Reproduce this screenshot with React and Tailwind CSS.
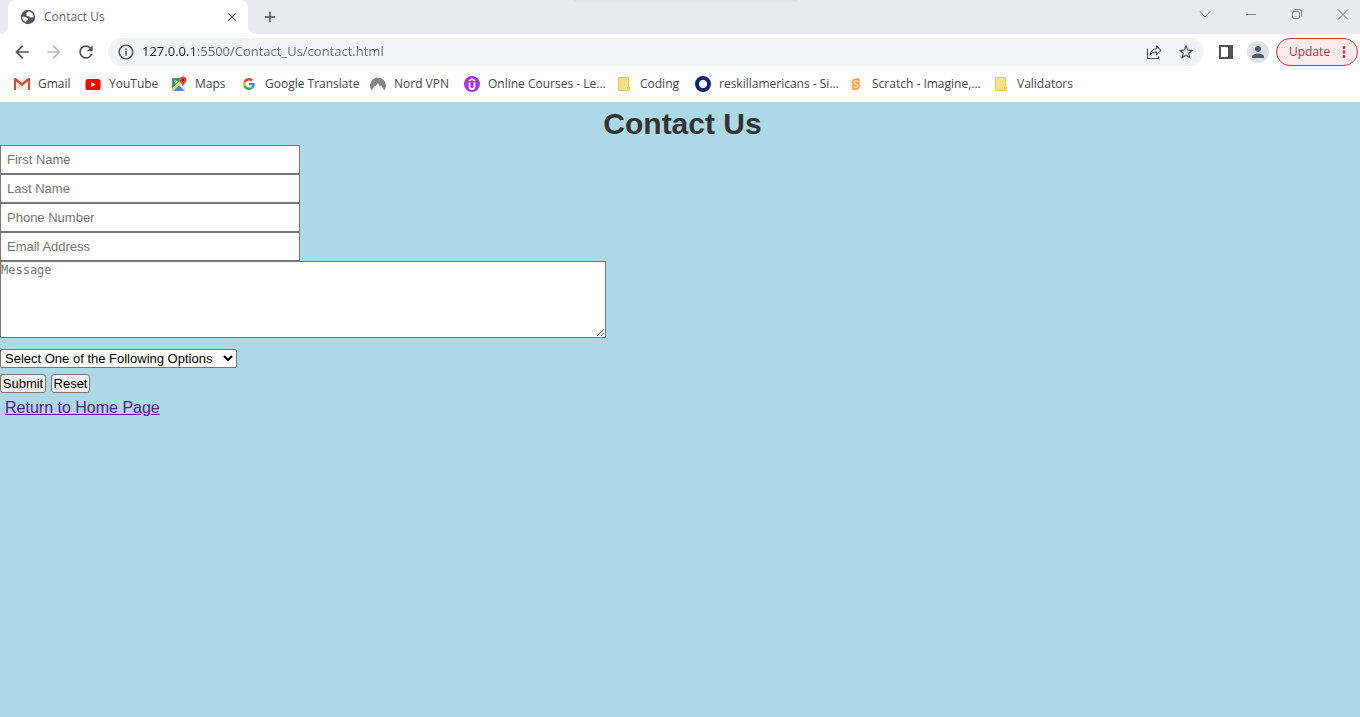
import React from "react";
import {
  MdArrowBack,
  MdArrowForward,
  MdRefresh,
  MdInfoOutline,
  MdStarOutline,
  MdPerson,
  MdClose,
  MdAdd,
  MdMoreVert,
} from "react-icons/md";

function GlobeIcon() {
  return (
    <svg viewBox="0 0 16 16" className="size-4">
      <circle cx="8" cy="8" r="7.200" fill="#53565a" />
      <path d="M8.500 2.300c-.3 1-1.600 1-2 1.700-.3.700.3 1.300-.1 1.900-.4.500.4 1.100 1.300 1.100 1.300.1 1.500.8 2.300 1.200.9.500 2.600-.2 3.700.3A5.800 5.800 0 0 0 8.500 2.300z" fill="#fff" />
      <path d="M2.200 7.600c1.200.3 2.700.1 3.800.7 1.200.6 2 1 1.900 1.900-.1.900-1.300.9-1.500 1.700-.1.600-.3 1-.6 1.400A5.800 5.800 0 0 1 2.200 7.600z" fill="#fff" />
    </svg>
  );
}

function GmailIcon() {
  return (
    <svg viewBox="0 0 16 16" className="size-4">
      <path d="M2 3h12v11H2z" fill="#eceaea" />
      <path d="M0 3.200C0 2.500.6 2 1.300 2H2l6 5 6-5h.7c.7 0 1.300.5 1.300 1.200V14h-2V5.200L8 10 2 5.200V14H0z" fill="#d14836" />
    </svg>
  );
}

function YouTubeIcon() {
  return (
    <svg viewBox="0 0 16 16" className="size-4">
      <rect x="0.5" y="3" width="15" height="11" rx="2.600" fill="#f00" />
      <path d="M6.300 6v5l4.300-2.500z" fill="#fff" />
    </svg>
  );
}

function MapsIcon() {
  return (
    <svg viewBox="0 0 16 16" className="size-4">
      <rect x="1" y="2" width="13" height="13" rx="1" fill="#e4e7ea" />
      <path d="M2 2h10L1 13V3a1 1 0 0 1 1-1z" fill="#2f9e58" />
      <path d="M1 12.500 10.500 3l1.500 1.500L2 15a1 1 0 0 1-1-1z" fill="#f6d25a" />
      <path d="M8 9.200 13.700 15H2.300z" fill="#4a8af4" />
      <path d="M6.300 5.500H4.900v.8h.7a1.200 1.200 0 1 1-.3-1.800" fill="none" stroke="#fff" strokeWidth="0.900" />
      <path d="M12 .500A3.500 3.500 0 0 0 8.500 4c0 2.600 2.700 3.500 3.500 6.500.8-3 3.500-3.900 3.500-6.500A3.500 3.500 0 0 0 12 .500z" fill="#dd4b3e" />
      <circle cx="12" cy="4" r="1.300" fill="#7d231c" />
    </svg>
  );
}

function GoogleIcon() {
  return (
    <svg viewBox="0 0 48 48" className="size-4 p-[2px]">
      <path fill="#ea4335" d="M24 9.500c3.540 0 6.710 1.220 9.210 3.600l6.850-6.850C35.900 2.380 30.470 0 24 0 14.620 0 6.510 5.380 2.560 13.220l7.980 6.190C12.430 13.720 17.740 9.500 24 9.500z" />
      <path fill="#4285f4" d="M46.980 24.550c0-1.570-.15-3.090-.38-4.550H24v9.020h12.940c-.58 2.960-2.260 5.480-4.780 7.180l7.730 6c4.510-4.180 7.090-10.360 7.090-17.650z" />
      <path fill="#fbbc05" d="M10.530 28.590c-.48-1.450-.76-2.990-.76-4.590s.27-3.140.76-4.590l-7.980-6.190C.92 16.460 0 20.120 0 24c0 3.880.92 7.540 2.560 10.780l7.970-6.190z" />
      <path fill="#34a853" d="M24 48c6.480 0 11.930-2.130 15.890-5.810l-7.730-6c-2.150 1.450-4.920 2.300-8.160 2.300-6.260 0-11.570-4.220-13.470-9.910l-7.980 6.190C6.510 42.620 14.620 48 24 48z" />
    </svg>
  );
}

function NordIcon() {
  return (
    <svg viewBox="0 0 16 16" className="size-4">
      <path d="M1.700 14.500A8 8 0 1 1 14.300 14.500L11 9.200l-1 1.600L7.900 7 5.700 10.300l-.8-.9z" fill="#85868a" />
    </svg>
  );
}

function UdemyIcon() {
  return (
    <svg viewBox="0 0 16 16" className="size-4">
      <circle cx="8" cy="8" r="8" fill="#a435f0" />
      <path d="M5.500 6.500v4a2.500 2.500 0 0 0 5 0v-4" fill="none" stroke="#fff" strokeWidth="1.800" />
      <path d="M5 4.900 8 3.200l3 1.700" fill="none" stroke="#fff" strokeWidth="1.500" />
    </svg>
  );
}

function NoteIcon() {
  return (
    <svg viewBox="0 0 16 16" className="size-4">
      <path d="M2.500 1.500h10v9.500h1v3.500h-11z" fill="#fbe08a" stroke="#e9c757" />
      <path d="M11.500 14.500V11h1" fill="none" stroke="#e9c757" />
    </svg>
  );
}

function RingIcon() {
  return (
    <svg viewBox="0 0 16 16" className="size-4">
      <circle cx="8" cy="8" r="6" fill="#fff" stroke="#02257d" strokeWidth="4" />
    </svg>
  );
}

function ScratchIcon() {
  return (
    <svg viewBox="0 0 16 16" className="size-4">
      <path d="M5 3 10.500 2l1.500 1.500-.5 3.500.5 4-1.800 2.500L5 14.200 3.800 12.500 4.300 9 3.800 5z" fill="#f7a64a" />
      <path d="M9.800 5.700C9.300 4.300 6.200 4.500 6.200 6.200S9.600 8 9.600 9.900s-2.900 2.100-3.400.5" fill="none" stroke="#fff3df" strokeWidth="1.100" />
    </svg>
  );
}

const bookmarks = [
  { label: "Gmail", Icon: GmailIcon, width: "w-[71px]" },
  { label: "YouTube", Icon: YouTubeIcon, width: "w-[86px]" },
  { label: "Maps", Icon: MapsIcon, width: "w-[70px]" },
  { label: "Google Translate", Icon: GoogleIcon, width: "w-[129px]" },
  { label: "Nord VPN", Icon: NordIcon, width: "w-[94px]" },
  { label: "Online Courses - Le...", Icon: UdemyIcon, width: "w-[152px]" },
  { label: "Coding", Icon: NoteIcon, width: "w-[79px]" },
  { label: "reskillamericans - Si...", Icon: RingIcon, width: "w-[153px]" },
  { label: "Scratch - Imagine,...", Icon: ScratchIcon, width: "w-[145px]" },
  { label: "Validators", Icon: NoteIcon, width: "w-[80px]" },
];

function TabStrip() {
  return (
    <div className="flex h-[34px] items-stretch bg-[#e8eaed]">
      <div className="flex w-2 bg-white">
        <div className="flex-1 rounded-br-lg bg-[#e8eaed]" />
      </div>
      <div className="flex w-60 items-center rounded-t-lg bg-white pr-2 pl-3">
        <GlobeIcon />
        <span className="ml-2 flex-1 text-[#5f6368]">Contact Us</span>
        <button type="button" aria-label="Close tab" className="grid size-4 place-items-center text-[#53565a]">
          <MdClose className="size-[14px]" />
        </button>
      </div>
      <div className="flex w-2 bg-white">
        <div className="flex-1 rounded-bl-lg bg-[#e8eaed]" />
      </div>
      <button type="button" aria-label="New tab" className="grid w-7 place-items-center text-[#4a4d51]">
        <MdAdd className="size-[18px]" />
      </button>
      <div className="flex flex-1 justify-center">
        <div className="mr-28 h-[3px] w-56 bg-linear-to-b from-[#dfe0e4] to-[#e8eaed]" />
      </div>
      <div className="flex h-7 items-center gap-[30px] pr-[9px] text-[#85878b]">
        <button type="button" aria-label="Search tabs" className="size-4">
          <svg viewBox="0 0 16 16" className="size-4" fill="none" stroke="currentColor"><path d="M3 5.500 8 11l5-5.500" /></svg>
        </button>
        <button type="button" aria-label="Minimize" className="size-4">
          <svg viewBox="0 0 16 16" className="size-4" fill="none" stroke="currentColor"><path d="M3 8.500h10" /></svg>
        </button>
        <button type="button" aria-label="Restore" className="size-4">
          <svg viewBox="0 0 16 16" className="size-4" fill="none" stroke="currentColor">
            <rect x="3.500" y="5.500" width="7" height="7" rx="1.500" />
            <path d="M5.500 3.500h5a2 2 0 0 1 2 2v5" />
          </svg>
        </button>
        <button type="button" aria-label="Close" className="size-4">
          <svg viewBox="0 0 16 16" className="size-4" fill="none" stroke="currentColor"><path d="m3 3.500 10 10m0-10-10 10" /></svg>
        </button>
      </div>
    </div>
  );
}

function Toolbar() {
  return (
    <div className="flex h-9 items-center bg-white pr-[2px] pl-3 text-[#505357]">
      <div className="flex gap-3">
        <button type="button" aria-label="Back"><MdArrowBack className="size-5" /></button>
        <button type="button" aria-label="Forward" className="text-[#b4b6b8]"><MdArrowForward className="size-5" /></button>
        <button type="button" aria-label="Reload"><MdRefresh className="size-5" /></button>
      </div>
      <div className="ml-3 flex h-7 flex-1 items-center rounded-full bg-[#f1f3f4] pr-[9px] pl-[9px]">
        <MdInfoOutline className="size-[18px]" />
        <input
          aria-label="Address"
          defaultValue="127.0.0.1:5500/Contact_Us/contact.html"
          className="ml-[7px] min-w-0 flex-1 bg-[linear-gradient(to_right,#202124_55px,#66696e_55px)] bg-clip-text text-[13px] text-transparent outline-none"
        />
        <div className="flex items-center gap-[14px]">
          <button type="button" aria-label="Share" className="size-[18px]">
            <svg viewBox="0 0 18 18" className="size-[18px]" fill="none" stroke="currentColor" strokeWidth="1.100">
              <path d="M2.500 5.500v10h11V13" />
              <path d="M11.500 3v2.700C7.500 6 5.500 8.500 5 12c1.500-2.200 3.500-3 6.500-3v2.700L16 7.300z" strokeLinejoin="round" />
            </svg>
          </button>
          <button type="button" aria-label="Bookmark this page"><MdStarOutline className="size-[18px]" /></button>
        </div>
      </div>
      <button type="button" aria-label="Side panel" className="ml-[14px] size-4">
        <svg viewBox="0 0 16 16" className="size-4">
          <path d="M1 1h14v14H1z" fill="#505357" />
          <path d="M3 3h7v10H3z" fill="#fff" />
        </svg>
      </button>
      <button type="button" aria-label="Profile" className="ml-[13px] grid size-[22px] place-items-center rounded-full bg-[#dee1e6] text-[#4d5a70]">
        <MdPerson className="size-[18px]" />
      </button>
      <button type="button" className="ml-[7px] flex h-7 w-[82px] items-center justify-between rounded-full border border-[#c5353a] bg-[#fbebeb] pr-1 pl-3 text-[#b3333a]">
        Update
        <MdMoreVert className="size-[18px] text-[#c5353a]" />
      </button>
    </div>
  );
}

function BookmarksBar() {
  return (
    <nav aria-label="Bookmarks" className="flex h-8 items-start overflow-hidden bg-white pt-[6px] pl-[14px] text-[#45484c]">
      {bookmarks.map(({ label, Icon, width }) => (
        <a key={label} href="#" className={`flex shrink-0 items-center gap-2 whitespace-nowrap ${width}`}>
          <Icon />
          {label}
        </a>
      ))}
    </nav>
  );
}

const fields = [
  { id: "firstName", label: "First Name", type: "text" },
  { id: "lastName", label: "Last Name", type: "text" },
  { id: "phone", label: "Phone Number", type: "tel" },
  { id: "email", label: "Email Address", type: "email" },
];

function ContactPage() {
  return (
    <main className="flex-1 border-t border-[#c3d9df] bg-[#add8e6] font-['Liberation_Sans',Arial,sans-serif]">
      <h1 className="pl-[5px] text-center text-[30px] leading-[42px] font-bold text-[#333]">Contact Us</h1>
      <form onSubmit={(event) => event.preventDefault()} className="flex flex-col items-start text-[13px]">
        {fields.map(({ id, label, type }) => (
          <input
            key={id}
            id={id}
            name={id}
            type={type}
            aria-label={label}
            placeholder={label}
            className="h-[29px] w-[300px] border border-[#767676] bg-white px-[6px] placeholder:text-[#757575]"
          />
        ))}
        <textarea
          name="message"
          aria-label="Message"
          placeholder="Message"
          className="h-[77px] w-[606px] max-w-full resize border border-[#767676] bg-white font-['DejaVu_Sans_Mono',monospace] text-xs placeholder:text-[#757575]"
        />
        <select aria-label="Options" className="mt-[11px] h-[19px] w-[237px] rounded-xs border border-[#767676] bg-white text-black">
          <option>Select One of the Following Options</option>
        </select>
        <div className="mt-[6px] flex gap-[5px] text-black">
          <button type="submit" className="h-[19px] w-[46px] rounded-[3px] border border-[#767676] bg-[#efefef] leading-4">Submit</button>
          <button type="reset" className="h-[19px] w-[39px] rounded-[3px] border border-[#767676] bg-[#efefef] leading-4">Reset</button>
        </div>
      </form>
      <a href="#" className="mt-[3px] ml-[5px] inline-block text-base text-[#551a8b] underline">Return to Home Page</a>
    </main>
  );
}

export default function App() {
  return (
    <div className="flex min-h-screen flex-col font-['Open_Sans','Noto_Sans',sans-serif] text-xs">
      <header>
        <TabStrip />
        <Toolbar />
        <BookmarksBar />
      </header>
      <ContactPage />
    </div>
  );
}
